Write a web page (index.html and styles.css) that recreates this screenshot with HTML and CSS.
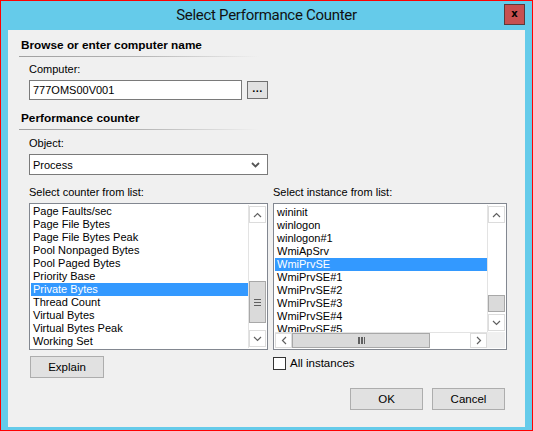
FILE: index.html
```html
<!DOCTYPE html>
<html>
<head>
<meta charset="utf-8">
<link rel="stylesheet" href="styles.css">
</head>
<body>
<div class="window">
  <div class="titlebar">
    <div></div>
    <div class="title">Select Performance Counter</div>
    <div class="close-wrap"><div class="close">x</div></div>
  </div>
  <div class="client">
    <div class="heading">Browse or enter computer name</div>
    <div class="sep"></div>
    <div class="label first">Computer:</div>
    <div class="computer-row">
      <div class="textbox">777OMS00V001</div>
      <div class="browse">...</div>
    </div>
    <div class="heading h2">Performance counter</div>
    <div class="sep"></div>
    <div class="label first obj">Object:</div>
    <div class="combo">
      <span>Process</span>
      <svg class="chev" width="9" height="6" viewBox="0 0 9 6"><polyline points="1,1 4.5,4.5 8,1" fill="none" stroke="#555" stroke-width="1.8"/></svg>
    </div>
    <div class="lists">
      <div class="col">
        <div class="label">Select counter from list:</div>
        <div class="listbox">
          <div class="items">
            <div class="item">Page Faults/sec</div>
            <div class="item">Page File Bytes</div>
            <div class="item">Page File Bytes Peak</div>
            <div class="item">Pool Nonpaged Bytes</div>
            <div class="item">Pool Paged Bytes</div>
            <div class="item">Priority Base</div>
            <div class="item sel">Private Bytes</div>
            <div class="item">Thread Count</div>
            <div class="item">Virtual Bytes</div>
            <div class="item">Virtual Bytes Peak</div>
            <div class="item">Working Set</div>
          </div>
          <div class="vscroll">
            <div class="arrow"><svg width="9" height="6" viewBox="0 0 9 6"><polyline points="1,5 4.5,1.5 8,5" fill="none" stroke="#606060" stroke-width="1.2"/></svg></div>
            <div class="track">
              <div class="vthumb left-thumb"><span class="grip-h"></span></div>
            </div>
            <div class="arrow"><svg width="9" height="6" viewBox="0 0 9 6"><polyline points="1,1 4.5,4.5 8,1" fill="none" stroke="#606060" stroke-width="1.2"/></svg></div>
          </div>
        </div>
        <div class="explain-row"><div class="btn explain">Explain</div></div>
      </div>
      <div class="col">
        <div class="label">Select instance from list:</div>
        <div class="listbox grid">
          <div class="items clip">
            <div class="item">wininit</div>
            <div class="item">winlogon</div>
            <div class="item">winlogon#1</div>
            <div class="item">WmiApSrv</div>
            <div class="item sel">WmiPrvSE</div>
            <div class="item">WmiPrvSE#1</div>
            <div class="item">WmiPrvSE#2</div>
            <div class="item">WmiPrvSE#3</div>
            <div class="item">WmiPrvSE#4</div>
            <div class="item">WmiPrvSE#5</div>
          </div>
          <div class="vscroll">
            <div class="arrow"><svg width="9" height="6" viewBox="0 0 9 6"><polyline points="1,5 4.5,1.5 8,5" fill="none" stroke="#606060" stroke-width="1.2"/></svg></div>
            <div class="track">
              <div class="vthumb right-thumb"></div>
            </div>
            <div class="arrow"><svg width="9" height="6" viewBox="0 0 9 6"><polyline points="1,1 4.5,4.5 8,1" fill="none" stroke="#606060" stroke-width="1.2"/></svg></div>
          </div>
          <div class="hscroll">
            <div class="harrow"><svg width="6" height="9" viewBox="0 0 6 9"><polyline points="5,1 1.5,4.5 5,8" fill="none" stroke="#606060" stroke-width="1.2"/></svg></div>
            <div class="htrack">
              <div class="hthumb"><span class="grip-v"></span></div>
            </div>
            <div class="harrow"><svg width="6" height="9" viewBox="0 0 6 9"><polyline points="1,1 4.5,4.5 1,8" fill="none" stroke="#606060" stroke-width="1.2"/></svg></div>
          </div>
          <div class="corner"></div>
        </div>
        <div class="check-row"><span class="checkbox"></span><span>All instances</span></div>
      </div>
    </div>
    <div class="buttons">
      <div class="btn ok">OK</div>
      <div class="btn cancel">Cancel</div>
    </div>
  </div>
</div>
</body>
</html>
```

FILE: styles.css
```css
* { box-sizing: border-box; }
html, body { margin: 0; padding: 0; }
body {
  width: 533px;
  height: 431px;
  overflow: hidden;
  font-family: "Liberation Sans", Arial, sans-serif;
  font-size: 11px;
  color: #000;
}
.window {
  width: 533px;
  height: 431px;
  border: 1px solid #ff0000;
  background: #65cbea;
  padding: 0 7px 3px 7px;
  display: flex;
  flex-direction: column;
}
.titlebar {
  height: 29px;
  display: grid;
  grid-template-columns: 1fr auto 1fr;
  align-items: start;
  margin: 0 -7px;
  padding: 0 7px;
}
.title {
  font-family: "Roboto", "Liberation Sans", sans-serif;
  font-size: 15px;
  line-height: 16px;
  padding-top: 6px;
  color: #111;
  letter-spacing: -0.3px;
}
.close-wrap { display: flex; justify-content: flex-end; padding-top: 3px; }
.close {
  width: 21px;
  height: 21px;
  background: #c75050;
  border: 1px solid #5a3a3a;
  color: #000;
  font-family: "DejaVu Sans", sans-serif;
  font-weight: bold;
  font-size: 10px;
  line-height: 17px;
  text-align: center;
}
.client {
  flex: 1;
  background: #f0f0f0;
  padding: 8px 19px 0 21px;
  display: flex;
  flex-direction: column;
}
.heading {
  font-weight: bold;
  font-size: 11.8px;
  line-height: 14px;
  margin-left: -8px;
}
.heading.h2 { margin-top: 11px; }
.sep {
  height: 1px;
  margin: 4px 0 0 -10px;
  width: 240px;
  background: linear-gradient(to right, #a0a0a0 0%, #b4b4b4 50%, rgba(240,240,240,0) 100%);
}
.label { line-height: 13px; }
.label.first { margin-top: 6px; }
.label.obj { margin-top: 7px; }
.computer-row {
  display: flex;
  gap: 5px;
  margin-top: 4px;
  align-items: flex-start;
}
.textbox {
  width: 213px;
  height: 20px;
  background: #fff;
  border: 1px solid #7a7a7a;
  padding: 3px 3px;
  line-height: 13px;
}
.browse {
  width: 21px;
  height: 18px;
  margin-top: 1px;
  background: #e1e1e1;
  border: 1px solid #707070;
  font-weight: bold;
  text-align: center;
  line-height: 12px;
  letter-spacing: 0.5px;
}
.combo {
  margin-top: 4px;
  width: 239px;
  height: 21px;
  background: #fff;
  border: 1px solid #7a7a7a;
  display: flex;
  align-items: center;
  justify-content: space-between;
  padding: 0 7px 0 3px;
}
.chev { display: block; }
.lists {
  margin-top: 11px;
  display: grid;
  grid-template-columns: 239px 234px;
  column-gap: 5px;
}
.col { display: flex; flex-direction: column; }
.col .label { margin-bottom: 4px; }
.listbox {
  height: 147px;
  background: #fff;
  border: 1px solid #828790;
  padding: 1px;
  display: flex;
}
.listbox.grid {
  display: grid;
  grid-template-columns: 1fr 18px;
  grid-template-rows: 1fr 16px;
}
.items { flex: 1; overflow: hidden; }
.items.clip { padding-top: 1px; }
.item {
  height: 13px;
  line-height: 13px;
  padding-left: 2px;
  white-space: nowrap;
}
.item.sel { background: #3399ff; color: #fff; }
.vscroll {
  width: 18px;
  display: flex;
  flex-direction: column;
  border-left: 1px solid #e3e3e3;
  padding: 1px 0 1px 0;
}
.arrow {
  height: 17px;
  border: 1px solid #dcdcdc;
  display: flex;
  align-items: center;
  justify-content: center;
}
.track {
  flex: 1;
  display: flex;
  flex-direction: column;
}
.vthumb {
  background: #dadada;
  border: 1px solid #a8a8a8;
  display: flex;
  align-items: center;
  justify-content: center;
}
.left-thumb { margin-top: 58px; height: 42px; }
.right-thumb { margin-top: 72px; height: 17px; }
.grip-h {
  width: 7px;
  height: 7px;
  background: repeating-linear-gradient(to bottom, #606060 0 1.5px, transparent 1.5px 3px);
}
.hscroll {
  display: flex;
  border-top: 1px solid #e3e3e3;
}
.harrow {
  width: 17px;
  border: 1px solid #dcdcdc;
  display: flex;
  align-items: center;
  justify-content: center;
}
.htrack { flex: 1; display: flex; }
.hthumb {
  width: 138px;
  background: #dadada;
  border: 1px solid #a8a8a8;
  display: flex;
  align-items: center;
  justify-content: center;
}
.grip-v {
  width: 7px;
  height: 7px;
  background: repeating-linear-gradient(to right, #606060 0 1.5px, transparent 1.5px 3px);
}
.corner { background: #f0f0f0; }
.explain-row { margin-top: 6px; padding-left: 1px; }
.btn {
  background: #e1e1e1;
  border: 1px solid #adadad;
  height: 22px;
  line-height: 20px;
  text-align: center;
  font-size: 11.5px;
}
.explain { width: 74px; }
.check-row {
  margin-top: 7px;
  display: flex;
  align-items: center;
  gap: 4px;
  line-height: 13px;
  font-size: 11.5px;
}
.checkbox {
  width: 13px;
  height: 13px;
  border: 1px solid #333;
  background: #fff;
}
.buttons {
  display: flex;
  justify-content: flex-end;
  gap: 9px;
  margin-top: 10px;
  margin-right: 1px;
}
.buttons .btn { width: 73px; }
```
